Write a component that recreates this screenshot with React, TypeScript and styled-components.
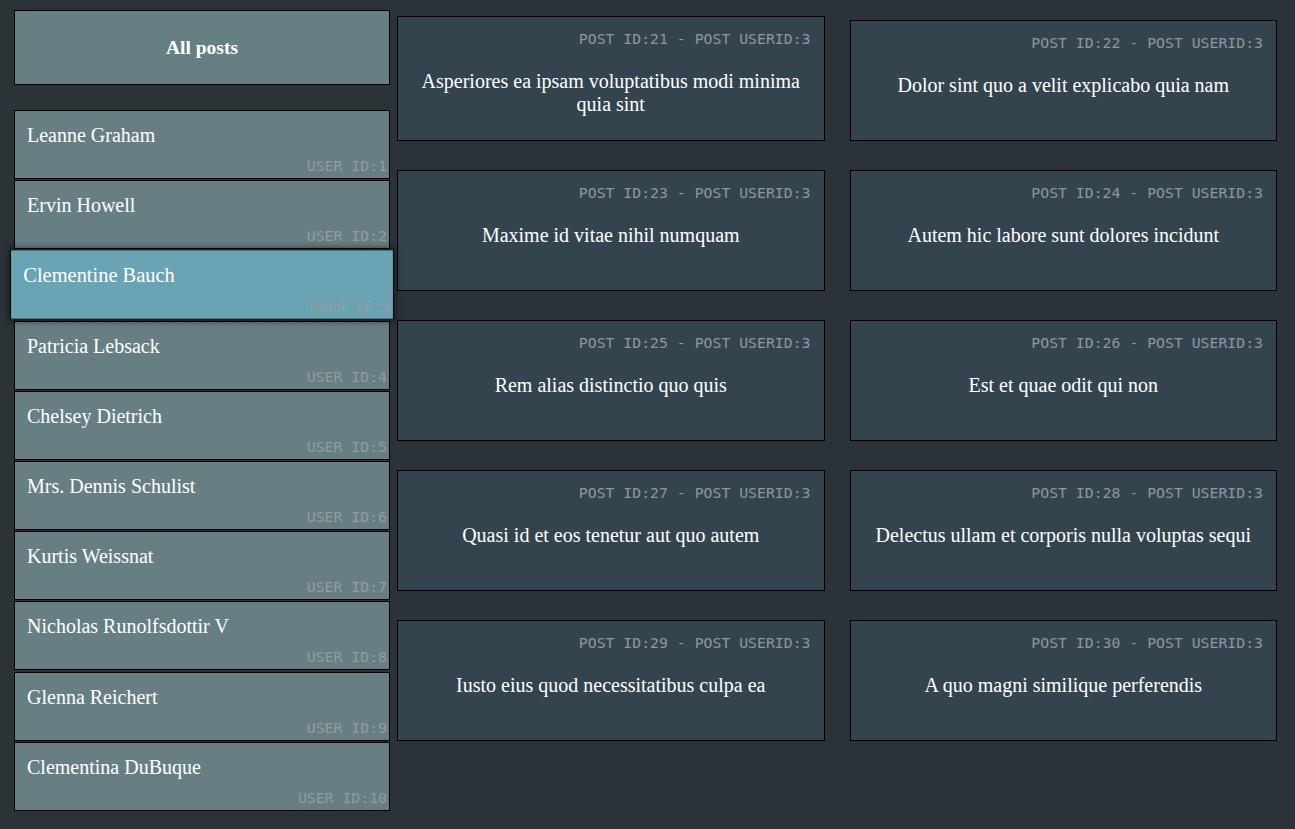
import React from "react";
import styled, { createGlobalStyle } from "styled-components";

const GlobalStyle = createGlobalStyle`
  html, body { margin: 0; padding: 0; background: #2b3238; }
  body { font-family: "Liberation Serif", "Times New Roman", serif; }
`;

const Page = styled.div`
  display: flex;
  align-items: flex-start;
  padding: 10px 18px 18px 14px;
  gap: 7px;
  min-height: 829px;
  box-sizing: border-box;
  background: #2b3238;
`;

const Sidebar = styled.aside`
  width: 376px;
  flex-shrink: 0;
  display: flex;
  flex-direction: column;
`;

const AllPosts = styled.button`
  height: 75px;
  box-sizing: border-box;
  border: 1px solid #000;
  background: #667f82;
  color: #fff;
  font-family: "Liberation Serif", serif;
  font-weight: bold;
  font-size: 19.5px;
  margin: 0 0 25px;
  padding: 0;
  cursor: pointer;
`;

const UserList = styled.ul`
  list-style: none;
  margin: 0;
  padding: 0;
  display: flex;
  flex-direction: column;
  gap: 1.2px;
`;

const UserCard = styled.li<{ $active?: boolean }>`
  height: 69px;
  box-sizing: border-box;
  border: 1px solid #000;
  background: ${(p) => (p.$active ? "#68a4b4" : "#677f82")};
  display: flex;
  flex-direction: column;
  justify-content: space-between;
  padding: 13px 2px 3px 12px;
  transform: ${(p) => (p.$active ? "scale(1.021)" : "none")};
  box-shadow: ${(p) => (p.$active ? "0 0 6px 1px rgba(0,0,0,0.55)" : "none")};
  position: relative;
  z-index: ${(p) => (p.$active ? 1 : 0)};
`;

const UserName = styled.span`
  color: #fff;
  font-size: 20px;
  line-height: 23px;
`;

const UserId = styled.span`
  align-self: flex-end;
  font-family: "DejaVu Sans Mono", monospace;
  font-size: 14.8px;
  line-height: 18px;
  color: #939c9d;
`;

const Posts = styled.main`
  flex: 1;
  display: grid;
  grid-template-columns: 1fr 1fr;
  column-gap: 25px;
  row-gap: 29px;
  align-items: end;
  margin-top: 6px;
`;

const PostCard = styled.article`
  min-height: 121px;
  box-sizing: border-box;
  border: 1px solid #000;
  background: #34444f;
  padding: 13px 13px 24px;
  display: flex;
  flex-direction: column;
`;

const PostMeta = styled.div`
  text-align: right;
  font-family: "DejaVu Sans Mono", monospace;
  font-size: 14.8px;
  line-height: 18px;
  color: #8e979b;
`;

const PostTitle = styled.h3`
  margin: 22px 10px 0;
  text-align: center;
  color: #fff;
  font-weight: normal;
  font-size: 20px;
  line-height: 23px;
`;

const users = [
  "Leanne Graham",
  "Ervin Howell",
  "Clementine Bauch",
  "Patricia Lebsack",
  "Chelsey Dietrich",
  "Mrs. Dennis Schulist",
  "Kurtis Weissnat",
  "Nicholas Runolfsdottir V",
  "Glenna Reichert",
  "Clementina DuBuque",
];

const posts = [
  { id: 21, title: "Asperiores ea ipsam voluptatibus modi minima quia sint" },
  { id: 22, title: "Dolor sint quo a velit explicabo quia nam" },
  { id: 23, title: "Maxime id vitae nihil numquam" },
  { id: 24, title: "Autem hic labore sunt dolores incidunt" },
  { id: 25, title: "Rem alias distinctio quo quis" },
  { id: 26, title: "Est et quae odit qui non" },
  { id: 27, title: "Quasi id et eos tenetur aut quo autem" },
  { id: 28, title: "Delectus ullam et corporis nulla voluptas sequi" },
  { id: 29, title: "Iusto eius quod necessitatibus culpa ea" },
  { id: 30, title: "A quo magni similique perferendis" },
];

export default function App() {
  const selected = 3;
  return (
    <>
      <GlobalStyle />
      <Page>
        <Sidebar>
          <AllPosts>All posts</AllPosts>
          <UserList>
            {users.map((name, i) => (
              <UserCard key={name} $active={i + 1 === selected}>
                <UserName>{name}</UserName>
                <UserId>USER ID:{i + 1}</UserId>
              </UserCard>
            ))}
          </UserList>
        </Sidebar>
        <Posts>
          {posts.map((p) => (
            <PostCard key={p.id}>
              <PostMeta>
                POST ID:{p.id} - POST USERID:{selected}
              </PostMeta>
              <PostTitle>{p.title}</PostTitle>
            </PostCard>
          ))}
        </Posts>
      </Page>
    </>
  );
}
